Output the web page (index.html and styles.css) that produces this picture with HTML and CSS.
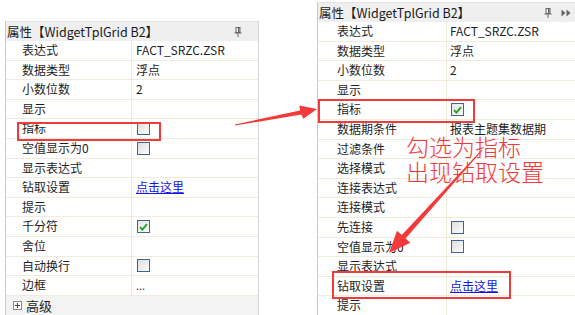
FILE: index.html
```html
<!DOCTYPE html>
<html lang="zh-CN">
<head>
<meta charset="utf-8">
<title>属性</title>
<link rel="stylesheet" href="styles.css">
</head>
<body>
<div class="canvas">
  <section class="panel panel-left">
    <header class="ph">
      <span class="title">属性【WidgetTplGrid B2】</span>
      <span class="icons">
        <svg class="pin" width="8" height="10" viewBox="0 0 8 10"><rect x="2" y="0.5" width="4" height="5" fill="none" stroke="#666" stroke-width="1"/><rect x="4" y="1" width="1.5" height="4" fill="#666"/><rect x="0.5" y="5.5" width="7" height="1" fill="#666"/><rect x="3.5" y="6.5" width="1" height="3.5" fill="#666"/></svg>
      </span>
    </header>
    <div class="row"><span class="k">表达式</span><span class="v">FACT_SRZC.ZSR</span></div>
    <div class="row"><span class="k">数据类型</span><span class="v">浮点</span></div>
    <div class="row"><span class="k">小数位数</span><span class="v">2</span></div>
    <div class="row"><span class="k">显示</span><span class="v"></span></div>
    <div class="row"><span class="k">指标</span><span class="v"><span class="cb"></span></span></div>
    <div class="row"><span class="k">空值显示为0</span><span class="v"><span class="cb"></span></span></div>
    <div class="row"><span class="k">显示表达式</span><span class="v"></span></div>
    <div class="row"><span class="k">钻取设置</span><span class="v"><a class="link">点击这里</a></span></div>
    <div class="row"><span class="k">提示</span><span class="v"></span></div>
    <div class="row"><span class="k">千分符</span><span class="v"><span class="cb on"><svg width="9" height="8" viewBox="0 0 9 8"><path d="M1 4.2 L3.4 6.6 L8 1.2" fill="none" stroke="#22a022" stroke-width="1.8"/></svg></span></span></div>
    <div class="row"><span class="k">舍位</span><span class="v"></span></div>
    <div class="row"><span class="k">自动换行</span><span class="v"><span class="cb"></span></span></div>
    <div class="row"><span class="k">边框</span><span class="v dots">...</span></div>
    <div class="group"><span class="plus"></span><span>高级</span></div>
  </section>

  <section class="panel panel-right">
    <header class="ph">
      <span class="title">属性【WidgetTplGrid B2】</span>
      <span class="icons">
        <svg class="pin" width="8" height="10" viewBox="0 0 8 10"><rect x="2" y="0.5" width="4" height="5" fill="none" stroke="#666" stroke-width="1"/><rect x="4" y="1" width="1.5" height="4" fill="#666"/><rect x="0.5" y="5.5" width="7" height="1" fill="#666"/><rect x="3.5" y="6.5" width="1" height="3.5" fill="#666"/></svg>
        <svg class="dbl" width="10" height="8" viewBox="0 0 10 8"><path d="M0.5 0.5 L4.5 4 L0.5 7.5 Z M5.5 0.5 L9.5 4 L5.5 7.5 Z" fill="#666"/></svg>
      </span>
    </header>
    <div class="row"><span class="k">表达式</span><span class="v">FACT_SRZC.ZSR</span></div>
    <div class="row"><span class="k">数据类型</span><span class="v">浮点</span></div>
    <div class="row"><span class="k">小数位数</span><span class="v">2</span></div>
    <div class="row"><span class="k">显示</span><span class="v"></span></div>
    <div class="row"><span class="k">指标</span><span class="v"><span class="cb on"><svg width="9" height="8" viewBox="0 0 9 8"><path d="M1 4.2 L3.4 6.6 L8 1.2" fill="none" stroke="#22a022" stroke-width="1.8"/></svg></span></span></div>
    <div class="row"><span class="k">数据期条件</span><span class="v">报表主题集数据期</span></div>
    <div class="row"><span class="k">过滤条件</span><span class="v"></span></div>
    <div class="row"><span class="k">选择模式</span><span class="v"></span></div>
    <div class="row"><span class="k">连接表达式</span><span class="v"></span></div>
    <div class="row"><span class="k">连接模式</span><span class="v"></span></div>
    <div class="row"><span class="k">先连接</span><span class="v"><span class="cb"></span></span></div>
    <div class="row"><span class="k">空值显示为0</span><span class="v"><span class="cb"></span></span></div>
    <div class="row"><span class="k">显示表达式</span><span class="v"></span></div>
    <div class="row"><span class="k">钻取设置</span><span class="v"><a class="link">点击这里</a></span></div>
    <div class="row"><span class="k">提示</span><span class="v"></span></div>
  </section>

  <div class="mark mark-a"></div>
  <div class="mark mark-b"></div>
  <div class="mark mark-c"></div>

  <div class="note">勾选为指标<br>出现钻取设置</div>

  <svg class="arrows" width="575" height="315" viewBox="0 0 575 315">
    <polygon fill="#f23a3a" points="234.9,124.5 300.1,110.4 299.3,105.4 317,109 303.3,118.8 301.5,114.6 235.1,125.5"/>
    <polygon fill="#f23a3a" points="481.6,149.7 401.8,235.0 397.0,230.7 389,253 410.4,242.7 405.6,238.4 482.4,150.3"/>
  </svg>
</div>
</body>
</html>
```

FILE: styles.css
```css
html, body {
  margin: 0;
  padding: 0;
  background: #ffffff;
  overflow: hidden;
}

.canvas {
  position: relative;
  width: 575px;
  height: 315px;
  overflow: hidden;
  display: flex;
  align-items: flex-start;
  font-family: "Noto Sans CJK SC", "Noto Sans", sans-serif;
  font-size: 12px;
  color: #1e1e1e;
}

.panel {
  box-sizing: border-box;
  border-left: 1px solid #c8c8c8;
  border-right: 1px solid #d4d4d4;
  background: #ffffff;
  flex: none;
}

.panel-left {
  --kw: 126px;
  --ind: 16px;
  --vp: 4px;
  width: 254px;
  margin-left: 5px;
  margin-top: 21px;
}

.panel-right {
  --kw: 129px;
  --ind: 19px;
  --vp: 3px;
  width: 270px;
  margin-left: 58px;
  margin-top: 2px;
}

.ph {
  height: 20px;
  box-sizing: border-box;
  background: #efefef;
  border-top: 1px solid #e2e2e2;
  display: flex;
  align-items: center;
  justify-content: space-between;
  padding-left: 1px;
}

.title {
  font-size: 12.5px;
  color: #1a1a1a;
  white-space: nowrap;
}

.icons {
  display: flex;
  align-items: center;
  gap: 9px;
}

.panel-left .icons {
  margin-right: 16px;
}

.panel-right .icons {
  margin-right: 15px;
}

.row {
  display: grid;
  grid-template-columns: var(--kw) 1fr;
  height: 19.6px;
  box-sizing: border-box;
  border-bottom: 1px solid #f0ebdd;
  line-height: 18.6px;
}

.k {
  padding-left: var(--ind);
  border-right: 1px solid #f0ebdd;
  white-space: nowrap;
}

.v {
  padding-left: var(--vp);
  display: flex;
  align-items: center;
  white-space: nowrap;
}

.dots {
  font-size: 11px;
  color: #333;
}

.cb {
  box-sizing: border-box;
  width: 13px;
  height: 13px;
  margin-left: 1px;
  border: 1px solid #3f6590;
  background: linear-gradient(135deg, #dcdcdc 0%, #f4f4f4 70%, #ffffff 100%);
  display: flex;
  align-items: center;
  justify-content: center;
}

.cb.on {
  background: linear-gradient(135deg, #e6e6e6 0%, #f8f8f8 100%);
}

.link {
  color: #1414e6;
  text-decoration: underline;
  cursor: pointer;
}

.group {
  height: 20px;
  background: #f3f3f3;
  display: flex;
  align-items: center;
  gap: 4px;
  padding-left: 7px;
  font-size: 13px;
}

.plus {
  width: 9px;
  height: 9px;
  box-sizing: border-box;
  border: 1px solid #8a8a8a;
  background:
    linear-gradient(#444, #444) center / 5px 1px no-repeat,
    linear-gradient(#444, #444) center / 1px 5px no-repeat,
    #ffffff;
}

.mark {
  position: absolute;
  box-sizing: border-box;
  border: 2.5px solid #f23a3a;
}

.mark-a {
  left: 17px;
  top: 122px;
  width: 144px;
  height: 19px;
}

.mark-b {
  left: 318px;
  top: 99px;
  width: 157px;
  height: 24px;
}

.mark-c {
  left: 332px;
  top: 271px;
  width: 179px;
  height: 28px;
}

.note {
  position: absolute;
  left: 406px;
  top: 134px;
  font-size: 23px;
  font-weight: 300;
  line-height: 25px;
  color: #f23a3a;
  white-space: nowrap;
}

.arrows {
  position: absolute;
  left: 0;
  top: 0;
  pointer-events: none;
}
```
